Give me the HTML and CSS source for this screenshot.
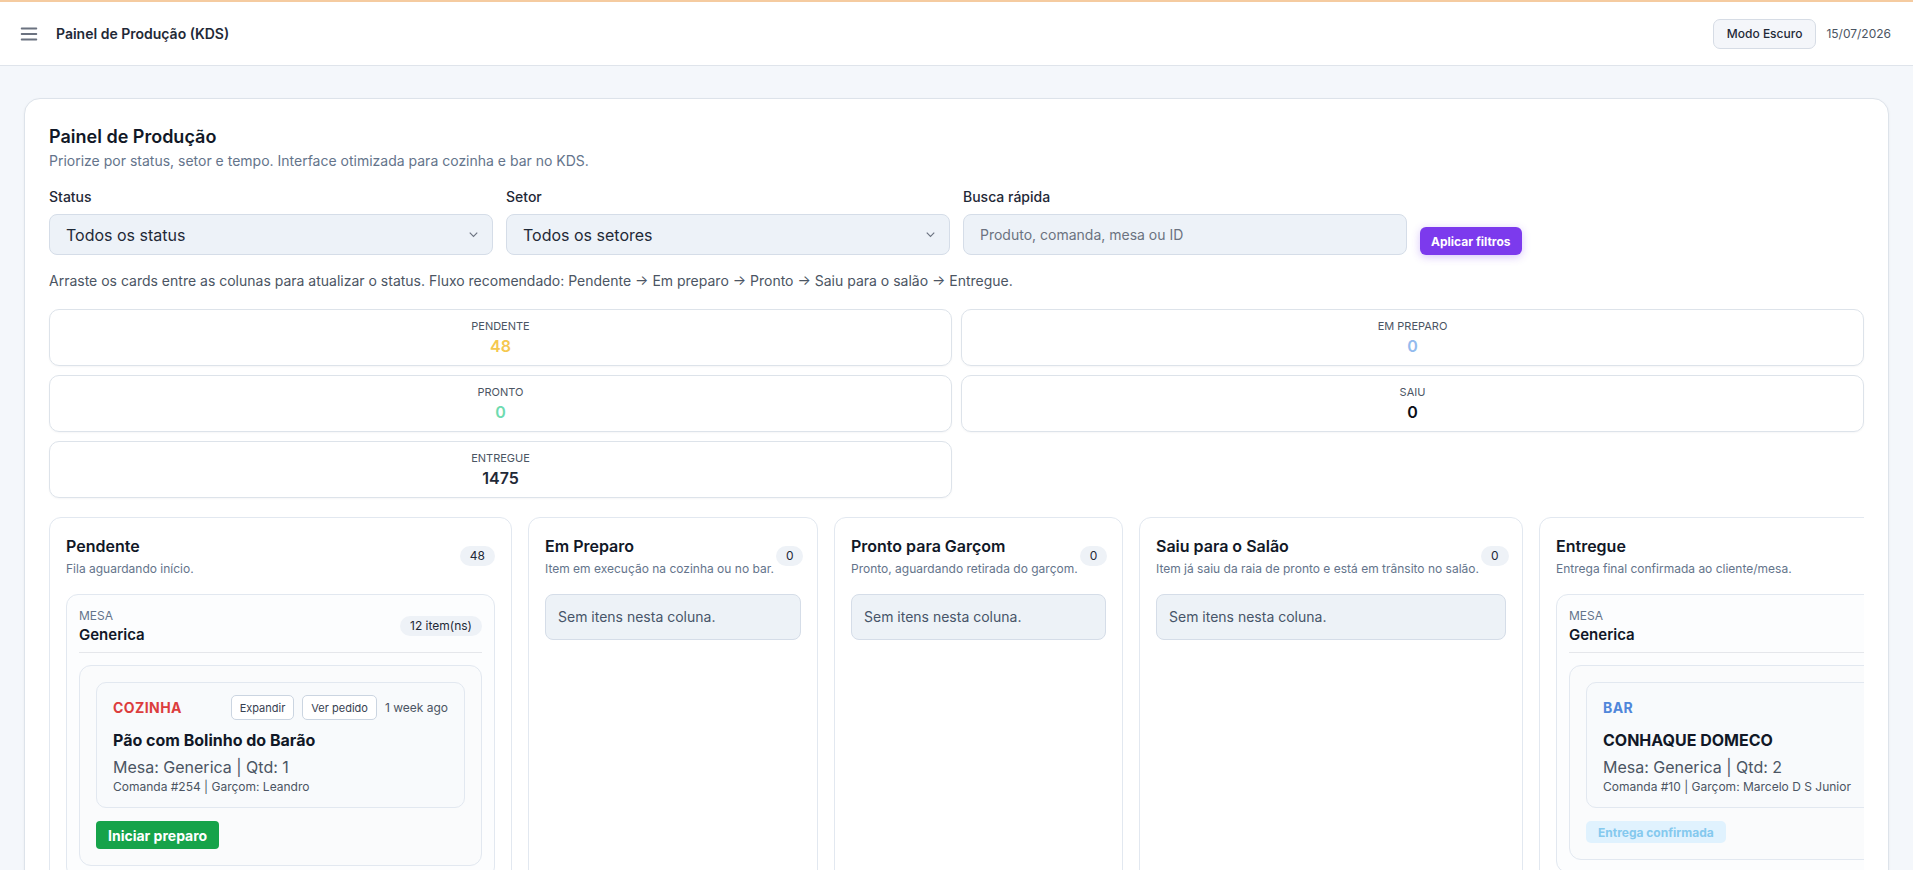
FILE: index.html
```html
<!DOCTYPE html>
<html lang="pt-BR">
<head>
    <meta charset="UTF-8">
    <meta name="viewport" content="width=device-width, initial-scale=1.0">
    <title>Painel de Produção (KDS)</title>
    <link rel="stylesheet" href="styles.css">
</head>
<body>
    <header class="topbar">
        <button class="menu-toggle" aria-label="Menu">
            <svg viewBox="0 0 24 24"><path d="M4 6h16M4 12h16M4 18h16"></path></svg>
        </button>
        <span class="topbar-title">Painel de Produção (KDS)</span>
        <div class="topbar-right">
            <button class="theme-button">Modo Escuro</button>
            <span class="topbar-date">15/07/2026</span>
        </div>
    </header>

    <main class="page">
        <section class="panel">
            <h1>Painel de Produção</h1>
            <p class="panel-subtitle">Priorize por status, setor e tempo. Interface otimizada para cozinha e bar no KDS.</p>

            <div class="filters">
                <div class="field">
                    <label>Status</label>
                    <div class="select">
                        <span>Todos os status</span>
                        <svg viewBox="0 0 12 12"><path d="M3 4.5l3 3 3-3"></path></svg>
                    </div>
                </div>
                <div class="field">
                    <label>Setor</label>
                    <div class="select">
                        <span>Todos os setores</span>
                        <svg viewBox="0 0 12 12"><path d="M3 4.5l3 3 3-3"></path></svg>
                    </div>
                </div>
                <div class="field">
                    <label>Busca rápida</label>
                    <input class="search-input" type="text" placeholder="Produto, comanda, mesa ou ID">
                </div>
                <button class="apply-button">Aplicar filtros</button>
            </div>

            <p class="hint">Arraste os cards entre as colunas para atualizar o status. Fluxo recomendado: Pendente → Em preparo → Pronto → Saiu para o salão → Entregue.</p>

            <div class="stats">
                <div class="stat">
                    <div class="stat-label">Pendente</div>
                    <div class="stat-value pending">48</div>
                </div>
                <div class="stat">
                    <div class="stat-label">Em preparo</div>
                    <div class="stat-value preparing">0</div>
                </div>
                <div class="stat">
                    <div class="stat-label">Pronto</div>
                    <div class="stat-value ready">0</div>
                </div>
                <div class="stat">
                    <div class="stat-label">Saiu</div>
                    <div class="stat-value out">0</div>
                </div>
                <div class="stat">
                    <div class="stat-label">Entregue</div>
                    <div class="stat-value">1475</div>
                </div>
            </div>

            <div class="board">
                <!-- Pendente -->
                <div class="lane lane-pending">
                    <div class="lane-head">
                        <div>
                            <div class="lane-title">Pendente</div>
                            <div class="lane-desc">Fila aguardando início.</div>
                        </div>
                        <span class="count">48</span>
                    </div>
                    <div class="group">
                        <div class="group-head">
                            <div>
                                <div class="group-label">Mesa</div>
                                <div class="group-name">Generica</div>
                            </div>
                            <span class="pill">12 item(ns)</span>
                        </div>
                        <div class="ticket">
                            <div class="item">
                                <div class="item-head">
                                    <span class="sector kitchen">COZINHA</span>
                                    <button class="item-btn">Expandir</button>
                                    <button class="item-btn">Ver pedido</button>
                                    <span class="item-time">1 week ago</span>
                                </div>
                                <div class="item-name">Pão com Bolinho do Barão</div>
                                <div class="item-meta">Mesa: Generica | Qtd: 1</div>
                                <div class="item-sub">Comanda #254 | Garçom: Leandro</div>
                            </div>
                            <button class="action start">Iniciar preparo</button>
                        </div>
                    </div>
                </div>

                <!-- Em preparo -->
                <div class="lane lane-preparing">
                    <div class="lane-head">
                        <div>
                            <div class="lane-title">Em Preparo</div>
                            <div class="lane-desc">Item em execução na cozinha ou no bar.</div>
                        </div>
                        <span class="count">0</span>
                    </div>
                    <div class="empty">Sem itens nesta coluna.</div>
                </div>

                <!-- Pronto -->
                <div class="lane lane-ready">
                    <div class="lane-head">
                        <div>
                            <div class="lane-title">Pronto para Garçom</div>
                            <div class="lane-desc">Pronto, aguardando retirada do garçom.</div>
                        </div>
                        <span class="count">0</span>
                    </div>
                    <div class="empty">Sem itens nesta coluna.</div>
                </div>

                <!-- Saiu -->
                <div class="lane lane-out">
                    <div class="lane-head">
                        <div>
                            <div class="lane-title">Saiu para o Salão</div>
                            <div class="lane-desc">Item já saiu da raia de pronto e está em trânsito no salão.</div>
                        </div>
                        <span class="count">0</span>
                    </div>
                    <div class="empty">Sem itens nesta coluna.</div>
                </div>

                <!-- Entregue -->
                <div class="lane lane-delivered">
                    <div class="lane-head">
                        <div>
                            <div class="lane-title">Entregue</div>
                            <div class="lane-desc">Entrega final confirmada ao cliente/mesa.</div>
                        </div>
                    </div>
                    <div class="group">
                        <div class="group-head">
                            <div>
                                <div class="group-label">Mesa</div>
                                <div class="group-name">Generica</div>
                            </div>
                        </div>
                        <div class="ticket">
                            <div class="item">
                                <div class="item-head">
                                    <span class="sector bar">BAR</span>
                                </div>
                                <div class="item-name">CONHAQUE DOMECO</div>
                                <div class="item-meta">Mesa: Generica | Qtd: 2</div>
                                <div class="item-sub">Comanda #10 | Garçom: Marcelo D S Junior</div>
                            </div>
                            <button class="action done" disabled>Entrega confirmada</button>
                        </div>
                    </div>
                </div>
            </div>
        </section>
    </main>
</body>
</html>
```

FILE: styles.css
```css
* {
    margin: 0;
    padding: 0;
    box-sizing: border-box;
}

body {
    font-family: Inter, "Noto Sans", sans-serif;
    background: #f4f7fb;
    color: #111827;
}

button,
input {
    font-family: inherit;
}

/* top bar */
.topbar {
    height: 66px;
    display: flex;
    align-items: center;
    padding: 0 22px 0 18px;
    background: #fff;
    border-top: 2px solid #f5cba0;
    border-bottom: 1px solid #dfe4eb;
}

.menu-toggle {
    width: 22px;
    height: 22px;
    background: none;
    border: 0;
    display: flex;
}

.menu-toggle svg {
    width: 22px;
    height: 22px;
    stroke: #6b7280;
    stroke-width: 2;
    fill: none;
    stroke-linecap: round;
}

.topbar-title {
    margin-left: 16px;
    font-size: 14px;
    font-weight: 600;
    color: #1f2937;
}

.topbar-right {
    margin-left: auto;
    display: flex;
    align-items: center;
    gap: 10px;
}

.theme-button {
    height: 30px;
    padding: 0 13px;
    background: #f4f6fa;
    border: 1px solid #d6dce5;
    border-radius: 7px;
    font-size: 12px;
    font-weight: 500;
    color: #1f2937;
}

.topbar-date {
    font-size: 12px;
    color: #4b5563;
}

/* main panel */
.page {
    padding: 32px 24px 24px;
}

.panel {
    background: #fff;
    border: 1px solid #dde3ea;
    border-radius: 16px;
    padding: 24px;
    box-shadow: 0 1px 3px rgba(15, 23, 42, 0.05);
}

h1 {
    font-size: 18px;
    font-weight: 600;
    line-height: 28px;
    color: #111827;
}

.panel-subtitle {
    font-size: 14px;
    line-height: 20px;
    color: #64748b;
}

.filters {
    display: flex;
    align-items: flex-end;
    gap: 13px;
    margin-top: 16px;
}

.field {
    width: 444px;
}

.field label {
    display: block;
    font-size: 14px;
    font-weight: 500;
    line-height: 20px;
    color: #1f2937;
    margin-bottom: 7px;
}

.select,
.search-input {
    width: 100%;
    height: 41px;
    padding: 0 16px;
    background: #edf2f8;
    border: 1px solid #d5dde8;
    border-radius: 8px;
    color: #1f2937;
}

.select {
    display: flex;
    align-items: center;
    justify-content: space-between;
    padding-right: 11px;
    font-size: 16px;
}

.select svg {
    width: 15px;
    height: 15px;
    stroke: #6b7280;
    stroke-width: 0.9;
    fill: none;
}

.search-input {
    font-size: 14px;
}

.search-input::placeholder {
    color: #6b7280;
}

.apply-button {
    height: 28px;
    padding: 0 11px;
    background: #7c3aed;
    color: #fff;
    border: 0;
    border-radius: 6px;
    font-size: 12px;
    font-weight: 700;
    box-shadow: 0 2px 8px rgba(124, 58, 237, 0.3);
}

.hint {
    margin-top: 16px;
    font-size: 14px;
    line-height: 20px;
    color: #4b5563;
}

/* counters */
.stats {
    display: grid;
    grid-template-columns: 1fr 1fr;
    gap: 9px;
    margin-top: 18px;
}

.stat {
    border: 1px solid #dde3ea;
    border-radius: 10px;
    padding: 8px 8px 7px;
    text-align: center;
    box-shadow: 0 1px 2px rgba(15, 23, 42, 0.04);
}

.stat-label {
    font-size: 11px;
    line-height: 16px;
    text-transform: uppercase;
    color: #4b5563;
}

.stat-value {
    font-size: 16px;
    font-weight: 600;
    line-height: 24px;
    color: #1f2937;
}

.stat-value.pending { color: #f5c84f; }
.stat-value.preparing { color: #93bbee; }
.stat-value.ready { color: #6edbb0; }
.stat-value.out { color: #0b0f17; }

/* kanban */
.board {
    display: flex;
    align-items: stretch;
    gap: 16px;
    margin-top: 19px;
    overflow-x: auto;
}

.lane {
    flex: none;
    background: #fff;
    border: 1px solid #e2e8f0;
    border-radius: 12px;
    padding: 16px;
    min-height: 520px;
}

.lane-pending { width: 463px; }
.lane-preparing { width: 290px; }
.lane-ready { width: 289px; }
.lane-out { width: 384px; }
.lane-delivered { width: 520px; }

.lane-head {
    display: flex;
    align-items: center;
    justify-content: space-between;
    gap: 2px;
    margin-bottom: 16px;
}

.lane-title {
    font-size: 16px;
    font-weight: 600;
    line-height: 24px;
    color: #111827;
}

.lane-desc {
    margin-top: 2px;
    font-size: 12px;
    line-height: 18px;
    color: #64748b;
    white-space: nowrap;
}

.count,
.pill {
    flex: none;
    background: #eef2f7;
    color: #1f2937;
    font-size: 12px;
    line-height: 18px;
    padding: 1px 10px;
    border-radius: 999px;
    white-space: nowrap;
}

.empty {
    background: #edf2f7;
    border: 1px solid #d5dde8;
    border-radius: 8px;
    padding: 12px;
    font-size: 14px;
    line-height: 20px;
    color: #475569;
}

.group {
    background: #fcfdfe;
    border: 1px solid #e2e8f0;
    border-radius: 12px;
    padding: 12px;
}

.group-head {
    display: flex;
    align-items: center;
    justify-content: space-between;
    padding-bottom: 7px;
    border-bottom: 1px solid #e5e7eb;
}

.group-label {
    font-size: 12px;
    line-height: 18px;
    text-transform: uppercase;
    color: #64748b;
}

.group-name {
    font-size: 15px;
    font-weight: 600;
    line-height: 20px;
    color: #111827;
}

.ticket {
    margin-top: 12px;
    background: #fafbfc;
    border: 1px solid #e2e8f0;
    border-radius: 12px;
    padding: 16px;
}

.item {
    background: #f8fafc;
    border: 1px solid #e2e8f0;
    border-radius: 10px;
    padding: 12px 16px;
}

.item-head {
    display: flex;
    align-items: center;
    gap: 8px;
    min-height: 25px;
}

.sector {
    margin-right: auto;
    font-size: 14px;
    font-weight: 700;
    letter-spacing: 0.03em;
}

.sector.kitchen { color: #dc3d3d; }
.sector.bar { color: #4f86da; }

.item-btn {
    height: 25px;
    padding: 0 8px;
    background: #fff;
    border: 1px solid #cbd5e1;
    border-radius: 5px;
    font-size: 11px;
    color: #374151;
}

.item-time {
    font-size: 12px;
    color: #4b5563;
}

.item-name {
    margin-top: 9px;
    font-size: 16px;
    font-weight: 700;
    line-height: 22px;
    color: #111827;
}

.item-meta {
    margin-top: 5px;
    font-size: 16px;
    line-height: 22px;
    color: #4b5563;
}

.item-sub {
    margin-top: 1px;
    font-size: 12px;
    line-height: 16px;
    color: #4b5563;
}

.action {
    margin-top: 13px;
    border: 0;
    white-space: nowrap;
}

.action.start {
    height: 28px;
    padding: 0 12px;
    background: #16a34a;
    color: #fff;
    border-radius: 4px;
    font-size: 14px;
    font-weight: 700;
}

.action.done {
    height: 22px;
    padding: 0 12px;
    background: #e0f2fe;
    color: #85c9ee;
    border-radius: 5px;
    font-size: 12px;
    font-weight: 700;
}
```
